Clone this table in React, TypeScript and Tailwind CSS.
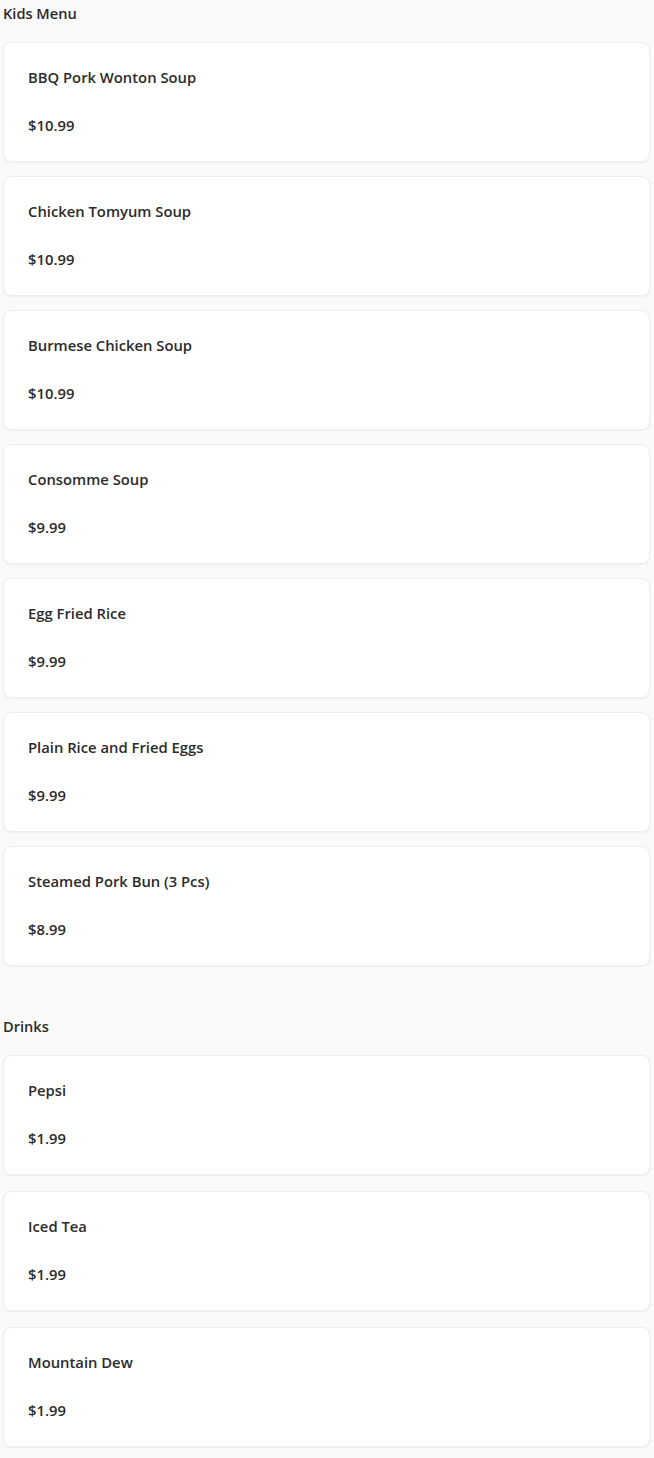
const kids = [
  { name: "BBQ Pork Wonton Soup", price: "$10.99" },
  { name: "Chicken Tomyum Soup", price: "$10.99" },
  { name: "Burmese Chicken Soup", price: "$10.99" },
  { name: "Consomme Soup", price: "$9.99" },
  { name: "Egg Fried Rice", price: "$9.99" },
  { name: "Plain Rice and Fried Eggs", price: "$9.99" },
  { name: "Steamed Pork Bun (3 Pcs)", price: "$8.99" },
];

const drinks = [
  { name: "Pepsi", price: "$1.99" },
  { name: "Iced Tea", price: "$1.99" },
  { name: "Mountain Dew", price: "$1.99" },
];

type Item = { name: string; price: string };

const Card = ({ item }: { item: Item }) => (
  <div className="ml-[3px] mr-[4px] h-[120px] rounded-lg border border-[#eeeeee] bg-white px-6 pt-[22px] shadow-[0_1px_2px_rgba(0,0,0,0.05)]">
    <div className="text-[14.8px] leading-6 font-semibold text-[#2b2b2b]">{item.name}</div>
    <div className="mt-6 text-[14.8px] leading-6 font-semibold text-[#2b2b2b]">{item.price}</div>
  </div>
);

const Section = ({ title, items, gap }: { title: string; items: Item[]; gap: string }) => (
  <section>
    <h2 className="pl-[3px] text-[14.6px] leading-5 font-semibold text-[#2a2a2a]">{title}</h2>
    <div className={gap}>
      {items.map((it) => (
        <Card key={it.name} item={it} />
      ))}
    </div>
  </section>
);

export default function App() {
  return (
    <div className="min-h-[1458px] w-full bg-[#fafafa] pt-[3px] font-['Open_Sans',sans-serif]">
      <Section title="Kids Menu" items={kids} gap="mt-[19px] flex flex-col gap-[14px]" />
      <div className="h-[50px]" />
      <Section title="Drinks" items={drinks} gap="mt-[19px] flex flex-col gap-[16px]" />
    </div>
  );
}
